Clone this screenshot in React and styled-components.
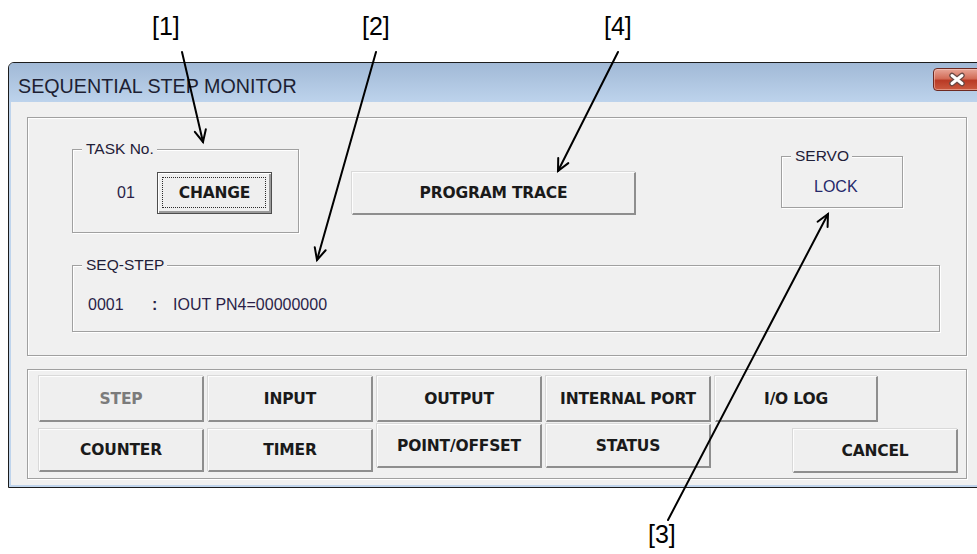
import React from "react"
import styled, { createGlobalStyle, css } from "styled-components"

const GlobalStyle = createGlobalStyle`
  html, body {
    margin: 0;
    padding: 0;
    background: #fff;
  }
  body {
    font-family: "Liberation Sans", Arial, sans-serif;
  }
`

// shared look

const etched = css`
  border: 1px solid #a0a0a0;
  box-shadow: inset 1px 1px 0 #fff, 1px 1px 0 #fff;
`

const Page = styled.div`
  position: relative;
  width: 977px;
  height: 554px;
  overflow: hidden;
  background: #fff;
`

// Window frame

const Window = styled.div`
  width: 978px;
  margin: 62px 0 0 8px;
  border: 1px solid #1c1c1c;
  border-radius: 6px 6px 0 0;
  background: #bfd4ec;
  box-sizing: border-box;
  overflow: hidden;
`

const TitleBar = styled.div`
  height: 39px;
  display: flex;
  align-items: flex-start;
  justify-content: space-between;
  background: linear-gradient(#a1b9d6, #bdd3ec);
`

const Title = styled.span`
  margin: 12px 0 0 9px;
  font-size: 19.7px;
  line-height: 22px;
  color: #1d1f33;
`

const CloseButton = styled.div`
  width: 48px;
  height: 23px;
  margin: 5px 4px 0 0;
  box-sizing: border-box;
  border: 1px solid #6e2a22;
  border-radius: 4px;
  background: linear-gradient(#e8a698, #d36d58 45%, #b93a25 55%, #cb5a40);
  box-shadow: inset 0 0 0 1px rgba(255, 220, 210, 0.45);
  display: flex;
  align-items: center;
  justify-content: center;
`

const Client = styled.div`
  margin: 0 2px 2px;
  padding: 15px 16px 6px;
  background: #f0f0f0;
  display: flex;
  flex-direction: column;
  gap: 13px;
`

// Panels

const UpperPanel = styled.div`
  ${etched};
  height: 239px;
  box-sizing: border-box;
  padding: 0 26px 0 44px;
  display: flex;
  flex-direction: column;
`

const TopRow = styled.div`
  height: 147px;
  display: flex;
  align-items: flex-start;
  padding-right: 37px;
`

const Group = styled.div`
  ${etched};
  position: relative;
  box-sizing: border-box;
  width: ${p => p.$w || "auto"};
  height: ${p => p.$h};
  margin-top: ${p => p.$top || 0}px;
  margin-left: ${p => p.$left || "0"};
`

const Legend = styled.span`
  position: absolute;
  top: -10px;
  left: 9px;
  padding: 0 3px 0 4px;
  background: #f0f0f0;
  font-size: 15.5px;
  line-height: 18px;
  color: #1f2038;
`

const TaskBody = styled.div`
  display: flex;
  align-items: center;
  padding: 22px 0 0 44px;
`

const Value = styled.span`
  font-size: 16px;
  line-height: 20px;
  color: #2a1f48;
  width: ${p => p.$w || "auto"};
  font-weight: ${p => (p.$bold ? 700 : 400)};
`

const ServoBody = styled.div`
  padding: 20px 0 0 32px;
  font-size: 16px;
  line-height: 20px;
  color: #25286a;
`

const SeqBody = styled.div`
  display: flex;
  align-items: center;
  padding: 29px 0 0 15px;
`

const LowerPanel = styled.div`
  ${etched};
  height: 110px;
  box-sizing: border-box;
  padding: 6px 8px 0 11px;
  display: flex;
  flex-direction: column;
  gap: 2px;
`

const ButtonRow = styled.div`
  display: flex;
  align-items: flex-start;
  gap: 4px;
`

// Buttons

const Button = styled.button`
  width: ${p => p.$w || 165}px;
  height: ${p => p.$h || 44}px;
  margin-top: ${p => p.$drop || 0}px;
  margin-left: ${p => (p.$push ? "auto" : "0")};
  padding: 0;
  box-sizing: border-box;
  background: #efefef;
  border-style: solid;
  border-width: 1px 2px 2px 1px;
  border-color: #fdfdfd #8e8e8e #8e8e8e #fdfdfd;
  box-shadow: -1px -1px 0 #d9d9d9;
  font-family: "DejaVu Sans", Verdana, sans-serif;
  font-weight: 700;
  font-size: 15.5px;
  letter-spacing: -0.2px;
  color: ${p => (p.disabled ? "#7b7b7b" : "#1a1a1a")};
  display: flex;
  align-items: center;
  justify-content: center;
  flex-shrink: 0;
`

const DefaultButton = styled(Button)`
  position: relative;
  border: 1px solid #4d4d4d;
  box-shadow: inset 1px 1px 0 #fff, inset -2px -2px 0 #9a9a9a;

  &::after {
    content: "";
    position: absolute;
    inset: 4px 5px 5px 4px;
    border: 1px dotted #2b2b2b;
  }
`

// Callouts drawn over the dialog

const Callout = styled.span`
  position: absolute;
  left: ${p => p.$x}px;
  top: ${p => p.$y}px;
  font-family: "Liberation Sans", Arial, sans-serif;
  font-size: 25px;
  line-height: 1;
  color: #000;
`

const Overlay = styled.svg`
  position: absolute;
  left: 0;
  top: 0;
  pointer-events: none;
`

const arrows = [
  { from: [182, 52], to: [203, 142] },
  { from: [376, 52], to: [317, 260] },
  { from: [618, 52], to: [558, 171] },
  { from: [668, 520], to: [828, 214] },
]

function Arrow({ from, to }) {
  const [x1, y1] = from
  const [x2, y2] = to
  const a = Math.atan2(y2 - y1, x2 - x1)
  const len = 13
  const spread = 0.45
  const b1 = [x2 - len * Math.cos(a - spread), y2 - len * Math.sin(a - spread)]
  const b2 = [x2 - len * Math.cos(a + spread), y2 - len * Math.sin(a + spread)]
  return (
    <g stroke="#000" strokeWidth="2" fill="none" strokeLinecap="round">
      <line x1={x1} y1={y1} x2={x2} y2={y2} />
      <polyline points={`${b1.join(",")} ${x2},${y2} ${b2.join(",")}`} />
    </g>
  )
}

const App = () => (
  <Page>
    <GlobalStyle />
    <Window>
      <TitleBar>
        <Title>SEQUENTIAL STEP MONITOR</Title>
        <CloseButton>
          <svg width="20" height="15" viewBox="0 0 20 15">
            <path d="M5 3.5 L15 11.5 M15 3.5 L5 11.5" stroke="#6a4a46" strokeWidth="5.5" strokeLinecap="round" />
            <path d="M5 3.5 L15 11.5 M15 3.5 L5 11.5" stroke="#fff" strokeWidth="3" strokeLinecap="round" />
          </svg>
        </CloseButton>
      </TitleBar>
      <Client>
        <UpperPanel>
          <TopRow>
            <Group $w="227px" $h="84px" $top={31}>
              <Legend>TASK No.</Legend>
              <TaskBody>
                <Value $w="40px">01</Value>
                <DefaultButton $w={115} $h={42}>CHANGE</DefaultButton>
              </TaskBody>
            </Group>
            <Button $w={284} $h={43} style={{ marginTop: 54, marginLeft: 53 }}>
              PROGRAM TRACE
            </Button>
            <Group $w="122px" $h="52px" $top={38} $left="auto">
              <Legend>SERVO</Legend>
              <ServoBody>LOCK</ServoBody>
            </Group>
          </TopRow>
          <Group $h="67px">
            <Legend>SEQ-STEP</Legend>
            <SeqBody>
              <Value $w="64px">0001</Value>
              <Value $w="21px" $bold>:</Value>
              <Value>IOUT PN4=00000000</Value>
            </SeqBody>
          </Group>
        </UpperPanel>
        <LowerPanel>
          <ButtonRow>
            <Button $h={46} disabled>STEP</Button>
            <Button $h={46}>INPUT</Button>
            <Button $h={46}>OUTPUT</Button>
            <Button $h={46}>INTERNAL PORT</Button>
            <Button $h={46} $w={163}>I/O LOG</Button>
          </ButtonRow>
          <ButtonRow>
            <Button $h={43} $drop={5}>COUNTER</Button>
            <Button $h={43} $drop={5}>TIMER</Button>
            <Button $h={44}>POINT/OFFSET</Button>
            <Button $h={44}>STATUS</Button>
            <Button $h={44} $drop={5} $push>CANCEL</Button>
          </ButtonRow>
        </LowerPanel>
      </Client>
    </Window>
    <Callout $x={152} $y={14}>[1]</Callout>
    <Callout $x={362} $y={14}>[2]</Callout>
    <Callout $x={604} $y={14}>[4]</Callout>
    <Callout $x={648} $y={522}>[3]</Callout>
    <Overlay width="977" height="554">
      {arrows.map((a, i) => (
        <Arrow key={i} {...a} />
      ))}
    </Overlay>
  </Page>
)

export default App
